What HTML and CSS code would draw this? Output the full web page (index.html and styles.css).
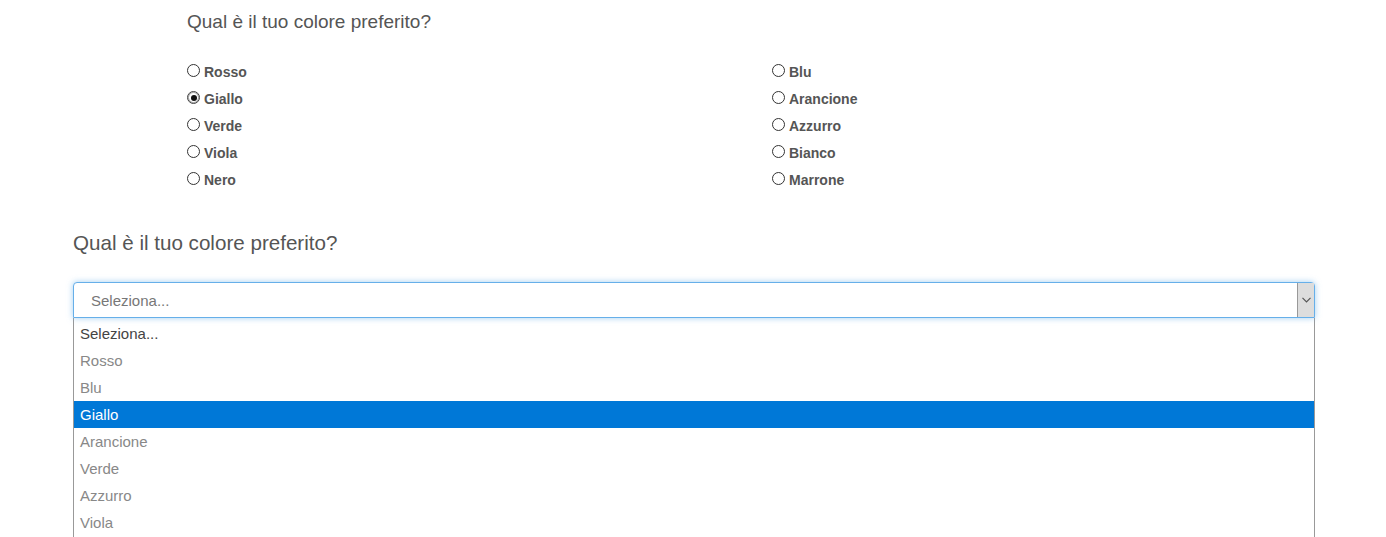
FILE: index.html
```html
<!DOCTYPE html>
<html lang="it">
<head>
<meta charset="utf-8">
<title>Colore preferito</title>
<link rel="stylesheet" href="styles.css">
</head>
<body>
<section class="radio-section">
  <h2 class="q q-small">Qual è il tuo colore preferito?</h2>
  <div class="radio-grid">
    <label class="radio"><span class="dot"></span>Rosso</label>
    <label class="radio"><span class="dot"></span>Blu</label>
    <label class="radio"><span class="dot checked"></span>Giallo</label>
    <label class="radio"><span class="dot"></span>Arancione</label>
    <label class="radio"><span class="dot"></span>Verde</label>
    <label class="radio"><span class="dot"></span>Azzurro</label>
    <label class="radio"><span class="dot"></span>Viola</label>
    <label class="radio"><span class="dot"></span>Bianco</label>
    <label class="radio"><span class="dot"></span>Nero</label>
    <label class="radio"><span class="dot"></span>Marrone</label>
  </div>
</section>
<section class="select-section">
  <h2 class="q q-large">Qual è il tuo colore preferito?</h2>
  <div class="select">
    <span class="select-value">Seleziona...</span>
    <span class="select-arrow">
      <svg width="9" height="6" viewBox="0 0 9 6"><path d="M0.5 0.8 L4.5 4.8 L8.5 0.8" fill="none" stroke="#555" stroke-width="1.2"/></svg>
    </span>
  </div>
  <ul class="options">
    <li class="opt first">Seleziona...</li>
    <li class="opt">Rosso</li>
    <li class="opt">Blu</li>
    <li class="opt selected">Giallo</li>
    <li class="opt">Arancione</li>
    <li class="opt">Verde</li>
    <li class="opt">Azzurro</li>
    <li class="opt">Viola</li>
  </ul>
</section>
</body>
</html>
```

FILE: styles.css
```css
html, body {
  margin: 0;
  padding: 0;
  background: #fff;
  overflow: hidden;
}
body {
  font-family: "Liberation Sans", Arial, sans-serif;
  color: #555;
}
.q {
  margin: 0;
  font-weight: normal;
  color: #555;
}
.q-small {
  font-size: 19px;
  line-height: 24px;
}
.q-large {
  font-size: 20.6px;
  line-height: 26px;
}
.radio-section {
  padding: 10px 0 0 187px;
}
.radio-grid {
  margin-top: 24px;
  display: grid;
  grid-template-columns: 585px 585px;
  grid-auto-rows: 27px;
}
.radio {
  display: flex;
  align-items: center;
  font-size: 14px;
  font-weight: bold;
  color: #555;
}
.dot {
  box-sizing: border-box;
  width: 13px;
  height: 13px;
  border: 1px solid #333;
  border-radius: 50%;
  margin: -2px 4px 0 0;
  background: #fff;
  position: relative;
}
.dot.checked {
  border-color: #444;
  box-shadow: inset 0 0 0 1px #aaa;
}
.dot.checked::after {
  content: "";
  position: absolute;
  left: 2.5px;
  top: 2.5px;
  width: 6px;
  height: 6px;
  border-radius: 50%;
  background: #111;
}
.select-section {
  padding: 37px 0 0 73px;
}
.select {
  box-sizing: border-box;
  margin-top: 26px;
  width: 1242px;
  height: 36px;
  border: 1px solid #66afe9;
  border-radius: 4px 4px 0 0;
  box-shadow: 0 0 6px rgba(102, 175, 233, 0.6);
  display: flex;
  align-items: center;
  background: #fff;
  position: relative;
  z-index: 1;
}
.select-value {
  flex: 1;
  padding-left: 17px;
  font-size: 15px;
  color: #777;
}
.select-arrow {
  box-sizing: border-box;
  width: 17px;
  height: 100%;
  background: #ddd;
  border-left: 1px solid #999;
  display: flex;
  align-items: center;
  justify-content: center;
}
.options {
  list-style: none;
  margin: 0;
  padding: 2px 0 4px 0;
  box-sizing: border-box;
  width: 1242px;
  border-left: 1px solid #999;
  border-right: 1px solid #999;
}
.opt {
  height: 27px;
  line-height: 27px;
  padding-left: 6px;
  font-size: 15px;
  color: #888;
}
.opt.first {
  color: #444;
}
.opt.selected {
  background: #0078d7;
  color: #fff;
}
```
